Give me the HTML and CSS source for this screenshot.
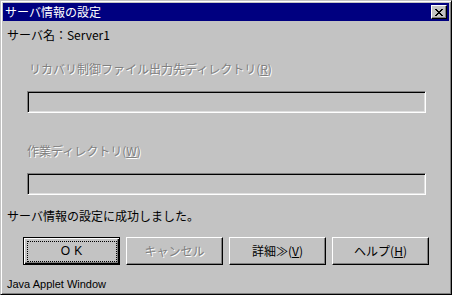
FILE: index.html
```html
<!DOCTYPE html>
<html lang="ja">
<head>
    <meta charset="UTF-8">
    <title>サーバ情報の設定</title>
    <link rel="stylesheet" href="styles.css">
</head>
<body>
    <div class="window">
        <div class="titlebar">
            <span class="title">サーバ情報の設定</span>
            <div class="close-btn">
                <svg width="8" height="7" viewBox="0 0 8 7" shape-rendering="crispEdges">
                    <path d="M0 0h2v1H0zM6 0h2v1H6zM1 1h2v1H1zM5 1h2v1H5zM2 2h4v1H2zM3 3h2v1H3zM2 4h4v1H2zM1 5h2v1H1zM5 5h2v1H5zM0 6h2v1H0zM6 6h2v1H6z" fill="#000"/>
                </svg>
            </div>
        </div>
        <div class="content">
            <div class="server-name">サーバ名：Server1</div>
            <div class="label disabled first">リカバリ制御ファイル出力先ディレクトリ(<u>R</u>)</div>
            <div class="field"></div>
            <div class="label disabled">作業ディレクトリ(<u>W</u>)</div>
            <div class="field"></div>
            <div class="message">サーバ情報の設定に成功しました。</div>
            <div class="buttons">
                <div class="btn default"><span class="focus">OK</span></div>
                <div class="btn disabled">キャンセル</div>
                <div class="btn">詳細≫(<u>V</u>)</div>
                <div class="btn">ヘルプ(<u>H</u>)</div>
            </div>
            <div class="footer">Java Applet Window</div>
        </div>
    </div>
</body>
</html>
```
FILE: styles.css
```css
body {
    margin: 0;
    background-color: #c3c3c3;
    font-family: "Noto Sans CJK JP", "Liberation Sans", sans-serif;
    font-size: 12px;
    color: #000;
}
.window {
    width: 452px;
    height: 295px;
    box-sizing: border-box;
    border: 1px solid;
    border-color: #c3c3c3 #000 #000 #c3c3c3;
    box-shadow: inset 1px 1px #fff, inset -1px -1px #808080;
    padding: 2px;
    display: flex;
    flex-direction: column;
    overflow: hidden;
}
.titlebar {
    height: 18px;
    background-color: #000080;
    color: #fff;
    display: flex;
    align-items: center;
    justify-content: space-between;
    padding: 0 2px;
}
.title {
    line-height: 16px;
}
.close-btn {
    width: 16px;
    height: 14px;
    box-sizing: border-box;
    background-color: #c3c3c3;
    border: 1px solid;
    border-color: #fff #000 #000 #fff;
    box-shadow: inset -1px -1px #808080;
    display: flex;
    align-items: center;
    justify-content: center;
}
.content {
    flex: 1;
    padding: 0 4px;
    line-height: 16px;
}
.server-name {
    margin-top: 6px;
}
.label {
    margin-top: 30px;
    margin-left: 20px;
}
.label.first {
    margin-top: 18px;
    margin-left: 22px;
}
.disabled {
    color: #808080;
    text-shadow: 1px 1px #fff;
}
.field {
    margin: 14px 0 0 20px;
    width: 399px;
    height: 22px;
    box-sizing: border-box;
    border: 1px solid;
    border-color: #808080 #fff #fff #808080;
    box-shadow: inset 1px 1px #000, inset -1px -1px #dfdfdf;
}
.message {
    margin-top: 13px;
}
.buttons {
    display: flex;
    gap: 6px;
    margin: 13px 0 0 16px;
}
.btn {
    width: 97px;
    height: 28px;
    box-sizing: border-box;
    border: 1px solid;
    border-color: #fff #000 #000 #fff;
    box-shadow: inset -1px -1px #808080;
    display: flex;
    align-items: center;
    justify-content: center;
}
.btn.default {
    border-color: #000;
    box-shadow: inset 1px 1px #fff, inset -1px -1px #000, inset -2px -2px #808080;
}
.focus {
    width: 90px;
    height: 21px;
    box-sizing: border-box;
    border: 1px dotted #000;
    display: flex;
    align-items: center;
    justify-content: center;
    font-family: "Liberation Sans", sans-serif;
    letter-spacing: 4px;
    padding-left: 4px;
}
.footer {
    margin-top: 12px;
    font-family: "Liberation Sans", sans-serif;
    font-size: 11px;
    line-height: 15px;
}
```
